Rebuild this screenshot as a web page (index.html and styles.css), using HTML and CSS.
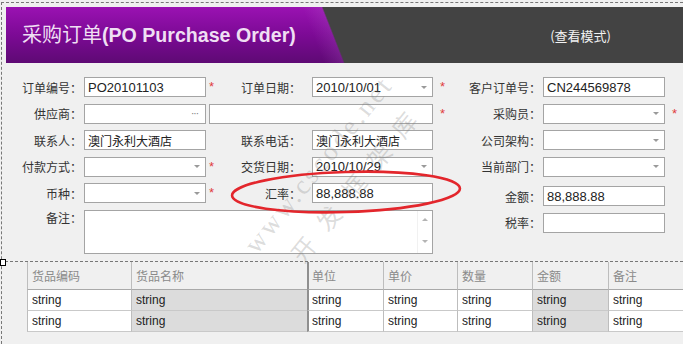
FILE: index.html
```html
<!DOCTYPE html>
<html lang="zh-CN">
<head>
<meta charset="utf-8">
<title>采购订单</title>
<link rel="stylesheet" href="styles.css">
</head>
<body>
<div class="designer">
  <header class="banner">
    <h1 class="title"><span class="title-cn">采购订单</span><span class="title-en">(PO Purchase Order)</span></h1>
    <span class="mode">(查看模式)</span>
  </header>

  <section class="form">
    <label class="lbl">订单编号：</label>
    <div class="field">PO20101103</div>
    <span class="req">*</span>
    <label class="lbl mid">订单日期：</label>
    <div class="field combo">2010/10/01</div>
    <span class="req far">*</span>
    <label class="lbl">客户订单号：</label>
    <div class="field">CN244569878</div>
    <span></span>

    <label class="lbl">供应商：</label>
    <div class="pair">
      <div class="field dots"></div>
      <div class="field"></div>
    </div>
    <span class="req far">*</span>
    <label class="lbl">采购员：</label>
    <div class="field combo"></div>
    <span class="req far">*</span>

    <label class="lbl">联系人：</label>
    <div class="field cjk">澳门永利大酒店</div>
    <span></span>
    <label class="lbl mid">联系电话：</label>
    <div class="field cjk">澳门永利大酒店</div>
    <span></span>
    <label class="lbl">公司架构：</label>
    <div class="field combo"></div>
    <span></span>

    <label class="lbl">付款方式：</label>
    <div class="field combo"></div>
    <span class="req">*</span>
    <label class="lbl mid">交货日期：</label>
    <div class="field combo">2010/10/29</div>
    <span></span>
    <label class="lbl">当前部门：</label>
    <div class="field combo"></div>
    <span></span>

    <label class="lbl">币种：</label>
    <div class="field combo"></div>
    <span class="req">*</span>
    <label class="lbl mid">汇率：</label>
    <div class="field">88,888.88</div>
    <span></span>
    <label class="lbl shift">金额：</label>
    <div class="field shift">88,888.88</div>
    <span></span>

    <label class="lbl top">备注：</label>
    <div class="memo">
      <div class="memo-text"></div>
      <div class="vbar"><span class="arrow up"></span><span class="arrow down"></span></div>
    </div>
    <span></span>
    <label class="lbl shift">税率：</label>
    <div class="field shift"></div>
    <span></span>
  </section>

  <div class="sep"></div>

  <div class="table">
    <div class="row head">
      <div class="cell ind"></div>
      <div class="cell">货品编码</div>
      <div class="cell">货品名称</div>
      <div class="cell strong">单位</div>
      <div class="cell">单价</div>
      <div class="cell">数量</div>
      <div class="cell">金额</div>
      <div class="cell">备注</div>
    </div>
    <div class="row">
      <div class="cell ind"></div>
      <div class="cell">string</div>
      <div class="cell ro">string</div>
      <div class="cell strong">string</div>
      <div class="cell">string</div>
      <div class="cell">string</div>
      <div class="cell ro">string</div>
      <div class="cell">string</div>
    </div>
    <div class="row">
      <div class="cell ind"></div>
      <div class="cell">string</div>
      <div class="cell ro">string</div>
      <div class="cell strong">string</div>
      <div class="cell">string</div>
      <div class="cell">string</div>
      <div class="cell ro">string</div>
      <div class="cell">string</div>
    </div>
  </div>
</div>

<div class="watermark" aria-hidden="true">
  <div class="wm-line">www.cscode.net</div>
  <div class="wm-line wm-cn">开发框架库</div>
</div>

<svg class="mark" width="250" height="56" viewBox="0 0 250 56" aria-hidden="true">
  <ellipse cx="125" cy="28" rx="114" ry="20" fill="none" stroke="#e3262c" stroke-width="2.6" transform="rotate(-1.8 125 28)"/>
</svg>
</body>
</html>
```

FILE: styles.css
```css
* { box-sizing: border-box; }

html, body { margin: 0; }

body {
  width: 683px;
  height: 344px;
  overflow: hidden;
  position: relative;
  background: #f0f0f0;
  font-family: "Noto Sans CJK SC", "Liberation Sans", sans-serif;
  color: #333;
}

.designer {
  margin: 2px 0 0 1px;
  border-top: 1px dashed #777;
  border-left: 1px dashed #777;
  min-height: 342px;
}

/* ---------- banner ---------- */
.banner {
  margin: 4px 0 0 4px;
  height: 56px;
  display: flex;
  align-items: center;
  justify-content: space-between;
  padding: 0 72px 0 16px;
  background:
    linear-gradient(68.56deg, rgba(0,0,0,0) 0, rgba(0,0,0,0) 296px, rgba(190,110,210,0.18) 314px, #434343 315.5px),
    linear-gradient(180deg, #9a12b2 0%, #7c0a95 50%, #5e0a74 100%);
}

.title {
  margin: 0;
  font-size: 20px;
  font-weight: normal;
  color: #efdff3;
  white-space: nowrap;
  line-height: 1;
}

.title-cn { font-family: "Noto Sans CJK SC", sans-serif; }

.title-en {
  font-family: "Liberation Sans", sans-serif;
  font-weight: bold;
  font-size: 19.6px;
}

.mode {
  font-size: 13px;
  color: #f2f2f2;
}

/* ---------- form ---------- */
.form {
  display: grid;
  grid-template-columns: 78px 122px 24px 82px 121px 27px 83px 122px 1fr;
  grid-template-rows: repeat(5, 20px) 44px;
  row-gap: 6.5px;
  margin: 14px 0 0 4px;
  padding-bottom: 7.5px;
}

.lbl {
  display: flex;
  align-items: center;
  justify-content: flex-end;
  padding-right: 2px;
  font-size: 12px;
  color: #333;
  white-space: nowrap;
}

.lbl.mid { padding-right: 11px; }

.lbl.top {
  align-self: start;
  height: 16px;
}

.shift {
  align-self: start;
  height: 20px;
  margin-top: 3px;
}

.field {
  height: 20px;
  display: flex;
  align-items: center;
  padding: 0 3px;
  border: 1px solid #a4a4a4;
  background: #fff;
  font: 13px "Liberation Sans", "Noto Sans CJK SC", sans-serif;
  color: #222;
  white-space: nowrap;
}

.field.cjk {
  font-family: "Noto Sans CJK SC", sans-serif;
  font-size: 12px;
}

.combo::after {
  content: "";
  margin-left: auto;
  margin-right: 2px;
  border-left: 3px solid transparent;
  border-right: 3px solid transparent;
  border-top: 3px solid #9a9a9a;
}

.dots::after {
  content: "···";
  margin-left: auto;
  margin-right: 4px;
  font-size: 10px;
  letter-spacing: -1px;
  color: #7a7a7a;
}

.pair {
  grid-column: 2 / 6;
  display: flex;
  gap: 3px;
}

.pair .field:first-child { width: 122px; flex: none; }
.pair .field:last-child { flex: 1; }

.req {
  padding-left: 3px;
  font: 13px/20px "Liberation Sans", sans-serif;
  color: #e03c3c;
}

.req.far { padding-left: 7px; }

.memo {
  grid-column: 2 / 6;
  height: 44px;
  display: flex;
  border: 1px solid #a4a4a4;
  background: #fff;
}

.memo-text { flex: 1; }

.vbar {
  width: 15px;
  display: flex;
  flex-direction: column;
  align-items: center;
  justify-content: space-between;
  padding: 7px 0 10px;
  border-left: 1px solid #f1f1f1;
}

.arrow {
  border-left: 3px solid transparent;
  border-right: 3px solid transparent;
}

.arrow.up { border-bottom: 3px solid #b4b4b4; }
.arrow.down { border-top: 3px solid #b4b4b4; }

/* ---------- separator ---------- */
.sep {
  position: relative;
  margin-left: -2px;
  border-top: 1px dashed #777;
}

.sep::before {
  content: "";
  position: absolute;
  left: 0;
  top: -3px;
  width: 4px;
  height: 5px;
  border: 1px solid #000;
  background: #fff;
}

/* ---------- grid ---------- */
.table { margin-left: 2px; }

.row {
  display: grid;
  grid-template-columns: 23px 104px 176px 76px 74px 75px 76px 1fr;
  height: 21px;
}

.row.head { height: 28px; }

.cell {
  display: flex;
  align-items: center;
  padding-left: 4px;
  border-left: 1px solid #bdbdbd;
  border-bottom: 1px solid #c9c9c9;
  background: #fff;
  font: 12px "Liberation Sans", sans-serif;
  color: #222;
  white-space: nowrap;
}

.cell.ind {
  background: transparent;
  border: 0;
}

.head .cell {
  background: transparent;
  border-bottom-color: #a9a9a9;
  font: 12px "Noto Sans CJK SC", sans-serif;
  color: #8a8a8a;
}

.cell.strong {
  border-left: 2px solid #8f8f8f;
  padding-left: 3px;
}

.cell.ro { background: #dcdcdc; }

/* ---------- overlays ---------- */
.watermark {
  position: absolute;
  left: 238px;
  top: 240px;
  transform: rotate(-51deg);
  transform-origin: 0 0;
  pointer-events: none;
}

.wm-line {
  font: 27px "Liberation Serif", serif;
  letter-spacing: 3px;
  color: rgba(120, 120, 120, 0.26);
  white-space: nowrap;
  line-height: 30px;
}

.wm-cn {
  margin-top: 8px;
  font: 24px "Noto Sans CJK SC", sans-serif;
  letter-spacing: 16px;
  padding-left: 22px;
}

.mark {
  position: absolute;
  left: 221px;
  top: 164px;
  pointer-events: none;
}
```
